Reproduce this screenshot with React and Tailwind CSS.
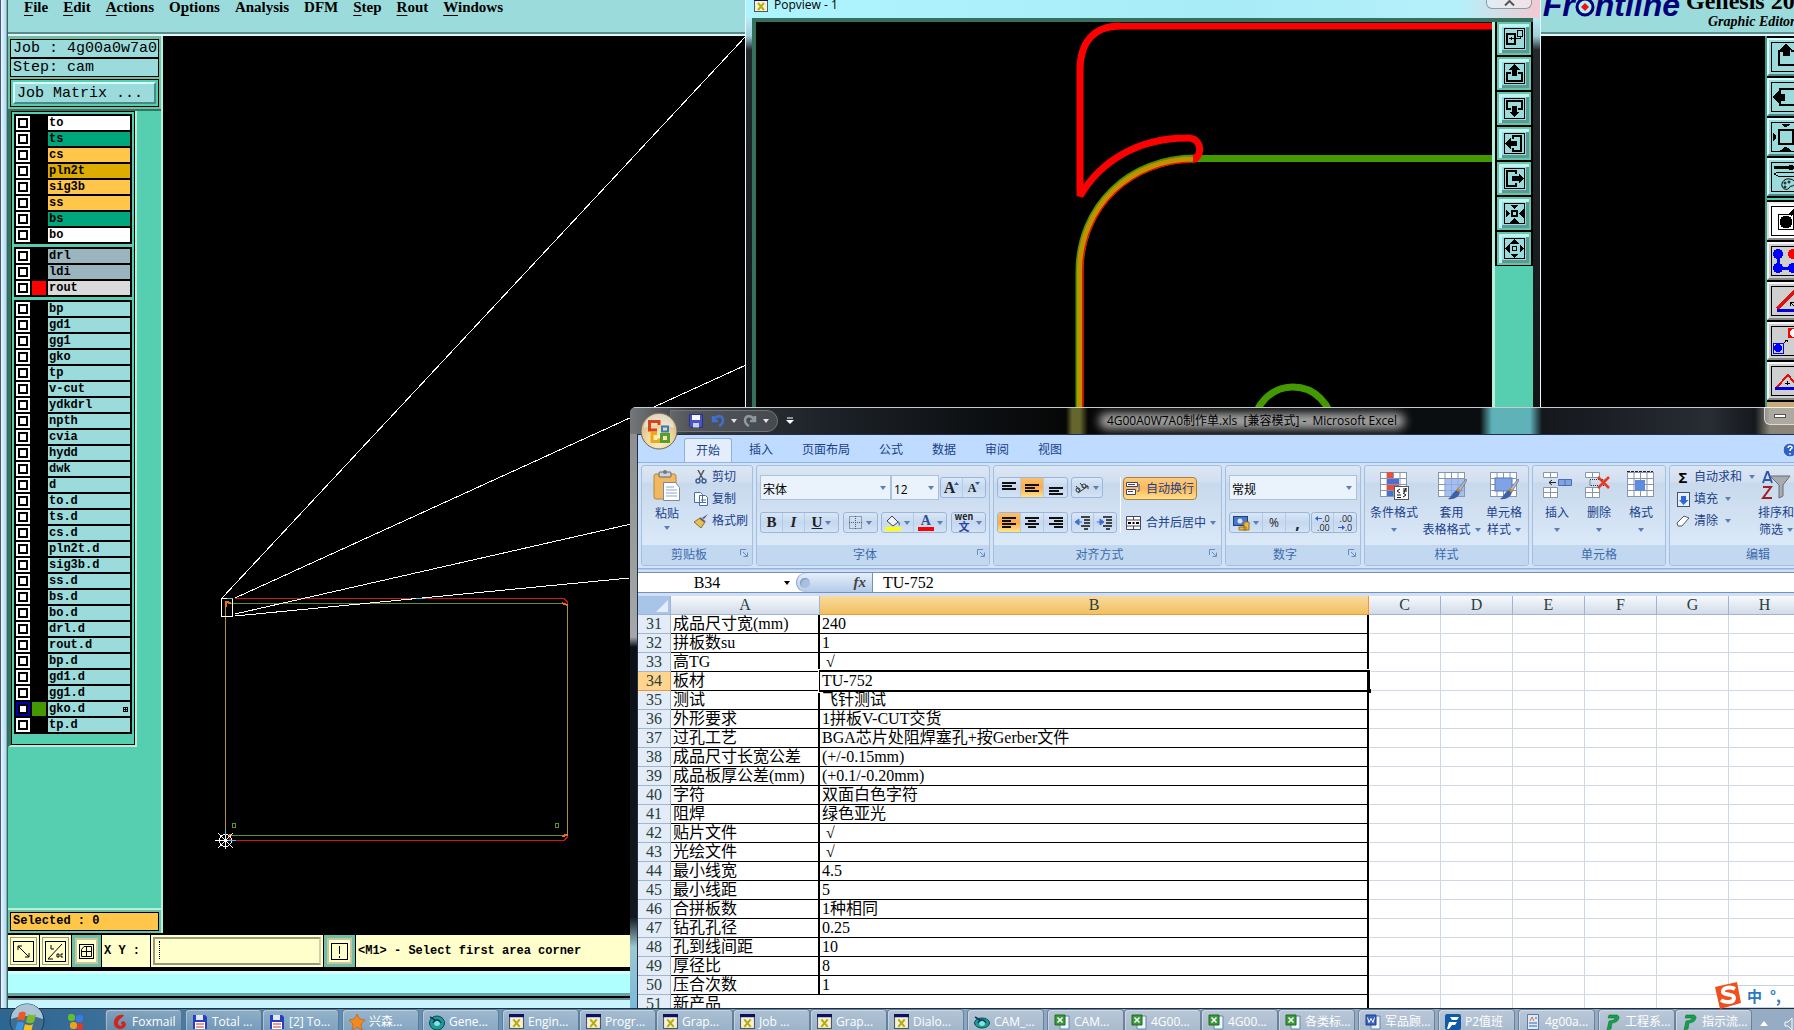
import React from 'react'
import clsx from 'clsx'

const LAYER_GROUPS = [
  [
    { name: 'to', bg: 'bg-white' },
    { name: 'ts', bg: 'bg-[#00a67c]' },
    { name: 'cs', bg: 'bg-[#ffc64a]' },
    { name: 'pln2t', bg: 'bg-[#dcac00]' },
    { name: 'sig3b', bg: 'bg-[#ffc64a]' },
    { name: 'ss', bg: 'bg-[#ffc64a]' },
    { name: 'bs', bg: 'bg-[#00a67c]' },
    { name: 'bo', bg: 'bg-white' },
  ],
  [
    { name: 'drl', bg: 'bg-[#9bb5bf]' },
    { name: 'ldi', bg: 'bg-[#9bb5bf]' },
    { name: 'rout', bg: 'bg-[#dadada]', color: 'bg-[#ff0000]' },
  ],
  [
    'bp', 'gd1', 'gg1', 'gko', 'tp', 'v-cut', 'ydkdrl', 'npth', 'cvia', 'hydd', 'dwk', 'd',
    'to.d', 'ts.d', 'cs.d', 'pln2t.d', 'sig3b.d', 'ss.d', 'bs.d', 'bo.d', 'drl.d', 'rout.d',
    'bp.d', 'gd1.d', 'gg1.d', 'gko.d', 'tp.d',
  ].map((name) => ({
    name,
    bg: 'bg-[#9bdbdb]',
    color: name === 'gko.d' ? 'bg-[#449900]' : undefined,
    work: name === 'gko.d',
  })),
]

const MENUS = [
  ['', 'F', 'ile'], ['', 'E', 'dit'], ['', 'A', 'ctions'], ['O', 'p', 'tions'], ['Analysis', '', ''],
  ['DFM', '', ''], ['', 'S', 'tep'], ['', 'R', 'out'], ['', 'W', 'indows'],
]

const ROWS = [
  [31, '成品尺寸宽(mm)', '240'],
  [32, '拼板数su', '1'],
  [33, '高TG', '√'],
  [34, '板材', 'TU-752'],
  [35, '测试', '飞针测试'],
  [36, '外形要求', '1拼板V-CUT交货'],
  [37, '过孔工艺', 'BGA芯片处阻焊塞孔+按Gerber文件'],
  [38, '成品尺寸长宽公差', '(+/-0.15mm)'],
  [39, '成品板厚公差(mm)', '(+0.1/-0.20mm)'],
  [40, '字符', '双面白色字符'],
  [41, '阻焊', '绿色亚光'],
  [42, '贴片文件', '√'],
  [43, '光绘文件', '√'],
  [44, '最小线宽', '4.5'],
  [45, '最小线距', '5'],
  [46, '合拼板数', '1种相同'],
  [47, '钻孔孔径', '0.25'],
  [48, '孔到线间距', '10'],
  [49, '厚径比', '8'],
  [50, '压合次数', '1'],
  [51, '新产品', ''],
]

const COLS = ['C', 'D', 'E', 'F', 'G', 'H']

const TASKS = [
  [['fox', 'Foxmail']],
  [['disk', 'Total ...'], ['disk', '[2] To...']],
  [['star', '兴森...']],
  [['globe', 'Gene...']],
  [['x', 'Engin...'], ['x', 'Progr...'], ['x', 'Grap...'], ['x', 'Job ...'], ['x', 'Grap...'], ['x', 'Dialo...']],
  [['eye', 'CAM_...']],
  [['excel', 'CAM...'], ['excel', '4G00...'], ['excel', '4G00...'], ['excel', '各类标...']],
  [['word', '军品顾...']],
  [['p2', 'P2值班']],
  [['doc', '4g00a...']],
  [['flow', '工程系...'], ['flow', '指示流...']],
]

/* ---------- Genesis ---------- */

const LayerRow = ({ layer }) => (
  <label className="flex h-4 gap-0.5 pb-0.5">
    <input
      type="checkbox"
      className={clsx(
        'm-0 h-3.5 w-3.5 shrink-0 appearance-none border-2 bg-white shadow-[inset_0_0_0_2px_#000]',
        layer.work ? 'border-[#0000a8]' : 'border-white'
      )}
    />
    <span className={clsx('h-3.5 w-3.5 shrink-0', layer.color)} />
    <span className={clsx('flex h-3.5 flex-1 items-center justify-between pl-px pr-0.5 font-bold', layer.bg)}>
      <span className="text-[12px] leading-[14px]">{layer.name}</span>
      {layer.work && (
        <svg width="5" height="5" viewBox="0 0 5 5" shapeRendering="crispEdges">
          <path d="M.5 .5h4v4h-4zM2.5 0v5M0 2.5h5" fill="none" stroke="#000" />
        </svg>
      )}
    </span>
  </label>
)

const Sidebar = () => (
  <aside className="mb-0.5 flex w-[155px] shrink-0 flex-col border-r-2 border-[#b5f0dc] bg-[#55cfb0] font-['Liberation_Mono',monospace] text-black">
    <div className="flex flex-col border-b-2 border-[#2f7564] bg-[#6fbfa6] px-0.5 pt-[3px] pb-0.5">
      <div className="flex h-[19px] items-center border border-black bg-[#9bdbdb] pl-0.5 text-[15px] leading-none whitespace-pre">Job : 4g00a0w7a0</div>
      <div className="flex h-[19px] items-center border border-black bg-[#9bdbdb] pl-0.5 text-[15px] leading-none">Step: cam</div>
      <div className="mt-0.5 border border-black bg-[#55cfb0] p-0.5">
        <button className="block h-[22px] w-full border-2 border-t-[#d5ffff] border-r-[#4a8785] border-b-[#4a8785] border-l-[#d5ffff] bg-[#9bdbdb] pl-0.5 text-left text-[15px] leading-none">
          Job Matrix ...
        </button>
      </div>
    </div>
    <div className="mr-6 border-r-2 border-b-2 border-l-[3px] border-r-[#b5f0dc] border-b-[#b5f0dc] border-l-[#2f7564]">
      <div className="flex flex-col gap-[3px] border border-black bg-[#55cfb0] px-0.5 pt-0.5 pb-2.5">
        {LAYER_GROUPS.map((group, i) => (
          <div key={i} className="bg-black px-0.5 pt-0.5">
            {group.map((layer) => (
              <LayerRow key={layer.name} layer={layer} />
            ))}
          </div>
        ))}
      </div>
    </div>
    <div className="mt-auto border-t-2 border-[#b5f0dc] bg-[#6fbfa6] px-0.5 py-0.5">
      <div className="h-[19px] border border-black bg-[#ffc64a] pl-0.5 text-[12px] leading-[17px] font-bold">Selected : 0</div>
    </div>
  </aside>
)

const BoardCanvas = () => (
  <svg className="block min-w-0 flex-1 bg-black" height="100%" shapeRendering="crispEdges">
    <g transform="translate(-163 -36)" fill="none">
      <g stroke="#d51414">
        <path d="M235 598.5H564l3 3v5M228 837l3 3.500H564l3-3v-3" />
      </g>
      <path d="M229 603.500H564M229 835.500H564" stroke="#5c9030" />
      <path d="M225.500 604V836M567.500 604V836" stroke="#b09040" />
      <path d="M226 607v-5l5 1M562 603l5 2M228 836l3-1M562 836l5-1" stroke="#f07010" strokeWidth="2" />
      <rect x="232.500" y="823" width="3" height="4" stroke="#5c9030" />
      <rect x="555.500" y="823" width="3" height="4" stroke="#5c9030" />
      <g stroke="#fff">
        <path d="M221.500 598.500h11v18h-11z" />
        <path d="M222 598L746 36M235 598L746 365M235 614L640 522M235 616L640 577" />
        <path d="M215 840.500h18M225.500 831v18M218 833l15 15M233 833l-15 15" />
        <circle cx="225.500" cy="840.500" r="6" />
      </g>
      <path d="M228 840.500h8M225.500 830v5M227 598.500h6M416 598.500h9" stroke="#50c0f0" />
    </g>
  </svg>
)

const ToolFrame = ({ tone, children }) => (
  <button
    className={clsx(
      'h-[38px] w-[38px] shrink-0 border-2 p-0.5',
      tone === 'teal' && 'border-t-[#d5ffff] border-r-[#4a8785] border-b-[#4a8785] border-l-[#d5ffff] bg-[#9bdbdb]',
      tone === 'white' && 'border-t-[#eee] border-r-[#888] border-b-[#888] border-l-[#ddd] bg-white',
      tone === 'gray' && 'border-t-[#f5f5f5] border-r-[#888] border-b-[#888] border-l-[#f5f5f5] bg-[#cfcfcf]'
    )}
  >
    <svg width="30" height="30" viewBox="0 0 30 30" fill="none" stroke="#000" shapeRendering="crispEdges">
      <rect x=".5" y=".5" width="29" height="29" />
      {children}
    </svg>
  </button>
)

const RightTools = () => (
  <div className="flex w-[29px] shrink-0 flex-col gap-0.5 overflow-hidden border-l-2 border-[#3f9a86] bg-black pt-0.5">
    <ToolFrame tone="teal">
      <path d="M12 9H8v14h16V9h-4" strokeWidth="2" />
      <path d="M15 2l5 5h-2v6h-6V7h-2z" fill="#000" />
    </ToolFrame>
    <ToolFrame tone="teal">
      <path d="M9 12V7h15v16H9v-5" strokeWidth="2" />
      <path d="M2 15l5-5v2h6v6H7v2z" fill="#000" />
    </ToolFrame>
    <ToolFrame tone="teal">
      <rect x="8" y="8" width="14" height="14" strokeWidth="2" />
      <path d="M15 5l-4-3h8zM15 25l-4 3h8zM5 15l-3-4v8zM25 15l3-4v8z" fill="#000" />
    </ToolFrame>
    <ToolFrame tone="teal">
      <path d="M3 5.500h14" strokeWidth="3" />
      <circle cx="20" cy="5.500" r="2.500" fill="#000" />
      <path d="M3 12l4-2h21v4H7z" />
      <g shapeRendering="auto">
        <path d="M19 17c-5-1-9 3-8 7 1 3 4 4 6 3s1-3 4-3 5-6-2-7z" />
        <circle cx="14" cy="21" r="1" />
        <circle cx="18" cy="20" r="1" />
        <circle cx="14" cy="25" r="1" />
      </g>
    </ToolFrame>
    <div className="h-0.5 shrink-0 bg-[#55cfb0]" />
    <ToolFrame tone="white">
      <rect x="7.500" y="8.500" width="15" height="15" />
      <circle cx="15" cy="16" r="6" fill="#000" />
      <path d="M19 9l6-6" strokeWidth="3" />
    </ToolFrame>
    <ToolFrame tone="gray">
      <path d="M7 8v14h15" stroke="#0000ff" strokeWidth="3" />
      <g stroke="none" fill="#0000ff">
        <circle cx="7" cy="8" r="5" />
        <circle cx="7" cy="22" r="5" />
        <circle cx="22" cy="22" r="5" />
        <circle cx="22" cy="8" r="5" fill="#f00" />
      </g>
    </ToolFrame>
    <ToolFrame tone="gray">
      <path d="M6 23L24 5" stroke="#e01010" strokeWidth="3" />
      <path d="M6 24.500h22" stroke="#0000e0" strokeWidth="3" />
      <path d="M19 20v-4h4M19 16l4 4" />
    </ToolFrame>
    <ToolFrame tone="gray">
      <rect x="2" y="17" width="10" height="10" stroke="#0000ff" />
      <circle cx="7" cy="22" r="4" fill="#0000ff" stroke="none" />
      <path d="M17 2h12v10H17z" fill="#f00" stroke="none" />
      <circle cx="23" cy="7" r="4" fill="#fff" stroke="none" />
      <path d="M13 17l3-3M14 14h2v2" />
    </ToolFrame>
    <ToolFrame tone="gray">
      <path d="M5 22L17 9l11 13" stroke="#e01010" strokeWidth="2" />
      <path d="M4 22.500h24" stroke="#0000e0" strokeWidth="3" />
      <path d="M16.500 19v-4M14 17h5" />
    </ToolFrame>
    <div className="min-h-0 flex-1 bg-[#c8ab78]" />
  </div>
)

const StatusIcon = ({ children }) => (
  <svg width="21" height="21" viewBox="0 0 21 21" fill="none" stroke="#000">
    <rect x=".5" y=".5" width="20" height="20" />
    {children}
  </svg>
)

const StatusBar = () => (
  <div className="flex h-[34px] shrink-0 gap-px border-b-2 border-black bg-black font-['Liberation_Mono',monospace] text-[12px] font-bold">
    <button aria-label="Zoom" className="flex w-[31px] items-center justify-center border border-[#ffffcc] bg-[#ffffcc] outline outline-1 -outline-offset-[3px] outline-[#99997a]">
      <StatusIcon><path d="M5 9V5h4M5 5l11 11M12 16h4v-4" /></StatusIcon>
    </button>
    <button aria-label="Angle" className="flex w-[31px] items-center justify-center border border-[#ffffcc] bg-[#ffffcc] outline outline-1 -outline-offset-[3px] outline-[#99997a]">
      <StatusIcon><path d="M3 18L17 3M3 18h5M6 4v4h3M12 13h2v3h-2zM18 13h-2v3h2" /></StatusIcon>
    </button>
    <button aria-label="Grid" className="flex w-[29px] items-center justify-center border-[3px] border-[#6fbfa6] bg-[#ffffcc] shadow-[inset_0_0_0_2px_#c8c8a0]">
      <svg width="15" height="15" viewBox="0 0 15 15" fill="none" stroke="#000">
        <rect x=".5" y=".5" width="14" height="14" />
        <path d="M5 2.500h7.500v10h-10v-7zM7.500 2.500v10M2.500 7.500h10" />
      </svg>
    </button>
    <label htmlFor="xy" className="flex w-[48px] items-center bg-[#ffffcc] pl-0.5 whitespace-pre">X Y :</label>
    <div className="relative w-[172px] bg-[#ffffcc] p-0.5">
      <input id="xy" className="h-full w-full border-2 border-t-[#99997a] border-r-[#d0d0a8] border-b-[#99997a] border-l-[#99997a] bg-[#ffffcc] outline-none" />
      <span className="absolute top-1.5 left-2 h-[18px] border-l border-dotted border-black" />
    </div>
    <button aria-label="Message" className="flex w-[31px] items-center justify-center border-[3px] border-[#6fbfa6] bg-[#ffffcc] shadow-[inset_0_0_0_2px_#c8c8a0]">
      <svg width="17" height="17" viewBox="0 0 17 17" fill="none" stroke="#000">
        <rect x=".5" y=".5" width="16" height="16" />
        <path d="M8.500 3v8M8.500 13v2" />
      </svg>
    </button>
    <div className="flex flex-1 items-center bg-[#ffffcc] pl-0.5">&lt;M1&gt; - Select first area corner</div>
  </div>
)

const FrontlineLogo = () => (
  <div className="flex items-end font-['Liberation_Sans',Arial,sans-serif] text-[32px] leading-[30px] font-bold text-[#00007a] italic">
    <span>Fr</span>
    <svg width="20" height="20" viewBox="0 0 20 20" className="mb-[3px]">
      <circle cx="10" cy="10" r="8" fill="#b8f0f0" stroke="#00007a" strokeWidth="3" />
      <path d="M10 6l4 4-4 4-4-4z" fill="#f01010" />
    </svg>
    <span>ntline</span>
  </div>
)

const GenesisWindow = () => (
  <section className="absolute inset-0 flex flex-col bg-[linear-gradient(90deg,#4a5a78_1px,#e4fbff_1px,#b5d5f5_6px,#e4fbff_6px,#2f6a60_7px,#2f6a60_8px,#c8f4fb_8px)] pl-2">
    <div className="flex h-9 shrink-0 items-start justify-between overflow-hidden border-b-2 border-[#e0f6f6] bg-[#9bdbdb] shadow-[inset_0_-2px_0_#5a8c8c]">
      <nav className="flex gap-[15px] pl-4 font-['Liberation_Serif',serif] text-[15px] leading-[14px] font-bold text-black">
        {MENUS.map(([a, u, b]) => (
          <button key={a + u + b}>
            {a}
            {u && <span className="underline underline-offset-3">{u}</span>}
            {b}
          </button>
        ))}
      </nav>
      <div className="flex shrink-0 items-start">
        <div className="-mt-2.5"><FrontlineLogo /></div>
        <div className="-mt-3 flex w-[114px] flex-col font-['Liberation_Serif',serif] font-bold whitespace-nowrap text-black">
          <span className="pl-1.5 text-[24px] leading-[26px]">Genesis 2000</span>
          <span className="pl-7 text-[14px] leading-4 italic">Graphic Editor</span>
        </div>
      </div>
    </div>
    <div className="flex min-h-0 flex-1 bg-black">
      <Sidebar />
      <BoardCanvas />
      <RightTools />
    </div>
    <StatusBar />
    <div className="h-[29px] shrink-0 border-y-2 border-black bg-[#b0ffff] shadow-[inset_0_3px_0_#d5ffff,inset_0_-3px_0_#6aa5a5]" />
    <div className="h-2.5 shrink-0 border-t-2 border-[#6a8c94] bg-[#c8f4fb]" />
  </section>
)

/* ---------- Popview ---------- */

const XIcon = ({ size = 14 }) => (
  <svg width={size} height={size} viewBox="0 0 14 14" className="shrink-0">
    <rect x=".5" y=".5" width="13" height="13" fill="#f4f0e0" stroke="#555" />
    <rect x="0" y="0" width="14" height="3" fill="#101060" />
    <path d="M4 5l6 7M10 5l-6 7" stroke="#b8b000" strokeWidth="2" />
  </svg>
)

const POP_ICONS = [
  <><path d="M2.500 5.500h8v10h-8z" strokeWidth="2" /><path d="M13.500 2.500h5v6h-5zM11 10h5V8M5 10.500h5M7 9v3" /></>,
  <><path d="M7 10H3v8h15v-8h-4" strokeWidth="2" /><path d="M10.500 2l4 4h-2v6h-4V6h-2z" fill="#000" /></>,
  <><path d="M7 11H3V3h15v8h-4" strokeWidth="2" /><path d="M10.500 18l4-4h-2V8h-4v6h-2z" fill="#000" /></>,
  <><path d="M9 6V3h8v15H9v-3" strokeWidth="2" /><path d="M2 10.500l4-4v2h6v4H6v2z" fill="#000" /></>,
  <><path d="M12 6V3H3v15h9v-3" strokeWidth="2" /><path d="M19 10.500l-4-4v2H8v4h7v2z" fill="#000" /></>,
  <><path d="M8 8h5v5H8z" strokeWidth="2" /><path d="M10.500 5.500L7 2h7zM10.500 15.500L7 19h7zM5.500 10.500L2 7v7zM15.500 10.500L19 7v7z" fill="#000" /></>,
  <><path d="M8.500 8.500h4v4h-4z" /><path d="M10.500 2L7.500 5h6zM10.500 19l-3-3h6zM2 10.500l3-3v6zM19 10.500l-3-3v6z" fill="#000" /></>,
]

const PopviewWindow = () => (
  <section className="absolute top-0 bottom-[500px] left-[745px] flex w-[796px] flex-col overflow-hidden border-x border-[#e8f8fc] bg-[linear-gradient(180deg,#aef2fc_0,#b8e8f4_20px,#9fd0dc_36px,#23282d_50px,#0c0e10_100%)]">
    <header className="flex h-[18px] shrink-0 items-start justify-between bg-[linear-gradient(90deg,#aef4fe_0,#a8ecf8_60%,#b5f0fa_90%,#f3c9d2_100%)] pl-2">
      <div className="-mt-0.5 flex items-center gap-1.5 font-['Open_Sans',sans-serif] text-[12px] leading-[14px] text-black">
        <XIcon />
        <span>Popview - 1</span>
      </div>
      <button className="mr-2 flex h-[9px] w-[46px] items-start justify-center rounded-b-md border border-t-0 border-[#8b9da8] bg-white/40" aria-label="Close">
        <svg width="11" height="6" viewBox="0 0 11 6"><path d="M1 5.500L5.500 1 10 5.500" fill="none" stroke="#555" strokeWidth="2" /></svg>
      </button>
    </header>
    <div className="mr-[7px] ml-1.5 flex min-h-0 flex-1 border-t-4 border-l-4 border-[#35705f] bg-black">
      <svg className="block min-w-0 flex-1 bg-black" height="100%">
        <g transform="translate(-756 -22)" fill="none">
          <path d="M1195 158.500h300" stroke="#449900" strokeWidth="7" />
          <path d="M1195 158.500C1130 158.500 1079.500 206 1079.500 272V420" stroke="#449900" strokeWidth="8" />
          <path d="M1190 160C1133 160 1081 206 1080.500 268V420" stroke="#f00" strokeWidth="6" />
          <path d="M1495 26h-375c-26 0-40 16-40 44V196C1100 162 1137 138 1187 138c16-1 16 20 5 22" stroke="#f00" strokeWidth="7" strokeLinejoin="bevel" />
          <path d="M1193 159C1131 159 1080 206 1079.500 270V420" stroke="#c09200" strokeWidth="5" />
          <path d="M1120 22.500h375" stroke="#000" />
          <circle cx="1293" cy="426" r="39" stroke="#449900" strokeWidth="7" />
        </g>
      </svg>
      <div className="flex w-[41px] shrink-0 flex-col border-l-[3px] border-[#b5f0dc] bg-[#55cfb0]">
        <div className="flex flex-col gap-0.5 bg-black px-0.5 pb-px">
          {POP_ICONS.map((icon, i) => (
            <button key={i} className="flex h-[33px] items-center justify-center border-2 border-[#66c4a8] bg-[#9bdbdb] shadow-[inset_3px_3px_0_#c0f4f4,inset_-3px_-3px_0_#5a9a96]">
              <svg width="21" height="21" viewBox="0 0 21 21" fill="none" stroke="#000" shapeRendering="crispEdges">
                <rect x=".5" y=".5" width="20" height="20" fill="#9bdbdb" />
                {icon}
              </svg>
            </button>
          ))}
        </div>
      </div>
    </div>
  </section>
)

/* ---------- Excel ---------- */

const Caret = ({ color = '#5d7fae' }) => (
  <svg width="6" height="4" viewBox="0 0 6 4" className="shrink-0"><path d="M0 0h6L3 4z" fill={color} /></svg>
)

const Group = ({ label, width, launcher, children }) => (
  <div className={clsx('flex h-[101px] shrink-0 flex-col overflow-hidden rounded-[3px] border border-[#a3bfdf] bg-[linear-gradient(180deg,#dce7f5_0,#d2dff0_16px,#c8d9ed_17px,#dbe9f8_80px)]', width)}>
    <div className="min-h-0 flex-1 px-[3px]">{children}</div>
    <div className="relative h-5 bg-[#c1d8f0] text-center text-[12px] leading-5 text-[#3e6aaa]">
      <span className={clsx(launcher && 'pr-4')}>{label}</span>
      {launcher && (
        <svg className="absolute top-1 right-1" width="8" height="8" viewBox="0 0 8 8" fill="none" stroke="#6a8cba">
          <path d="M.5 6V.5H6M3 3l4 4M7.500 3.500v4h-4" />
        </svg>
      )}
    </div>
  </div>
)

const Set = ({ children }) => (
  <div className="flex h-[21px] shrink-0 divide-x divide-[#b4cbe6] overflow-hidden rounded-[3px] border border-[#9ab6da] bg-[linear-gradient(180deg,#dae7f6_0,#c5d8ef_50%,#d4e3f5_100%)]">{children}</div>
)

const Btn = ({ w = 'w-[23px]', on, label, children }) => (
  <button
    aria-label={label}
    className={clsx('flex h-full items-center justify-center gap-[3px]', w, on && 'bg-[linear-gradient(180deg,#fbc06a_0,#fdaa4a_50%,#ffe58a_100%)]')}
  >
    {children}
  </button>
)

const Lines = ({ ws, y = 1, align = 'start' }) => (
  <svg width="14" height="14" viewBox="0 0 14 14" shapeRendering="crispEdges">
    {ws.map((w, i) => (
      <rect key={i} x={align === 'start' ? 0 : align === 'end' ? 14 - w : (14 - w) / 2} y={y + i * 3} width={w} height={ws.length > 4 ? 1 : 2} fill="#111" />
    ))}
  </svg>
)

const Combo = ({ label, options, w }) => (
  <div className={clsx('relative h-[25px] border border-[#abc1de] bg-[#eaf2fb]', w)}>
    <select aria-label={label} className="h-full w-full appearance-none bg-transparent pl-0.5 text-[12px] text-black outline-none">
      {options.map((o) => <option key={o}>{o}</option>)}
    </select>
    <span className="pointer-events-none absolute top-0 right-1 flex h-full items-center"><Caret /></span>
  </div>
)

const GridIcon = ({ kind }) => (
  <svg width="30" height="30" viewBox="0 0 30 30">
    {kind !== 'ins' && kind !== 'del' && (
      <>
        <rect x="1.500" y="2.500" width="26" height="24" fill="#fff" stroke="#8795ad" />
        <path d="M1.500 8.500h26M1.500 14.500h26M1.500 20.500h26M8 2.500v24M14.500 2.500v24M21 2.500v24" stroke="#8795ad" />
      </>
    )}
    {kind === 'cond' && (
      <>
        <path d="M8 2h6v6H8zM8 15h12v5H8z" fill="#e8503a" />
        <path d="M8 9h12v5H8zM8 21h6v5H8z" fill="#4a6fd0" />
        <rect x="15.500" y="16.500" width="14" height="13" fill="#fff" stroke="#556" />
        <path d="M21 19l-3 2 3 2M18 25h4M18 27.500h4M24 19h4M24 21h4M27 18l-2 5M24 23l3 2-3 2" fill="none" stroke="#111" />
      </>
    )}
    {kind === 'table' && <path d="M8 9h19v17H8z" fill="#8fb0ea" opacity=".8" />}
    {kind === 'cell' && <rect x="6" y="8" width="17" height="13" fill="#7fa4e6" stroke="#5476b8" />}
    {(kind === 'table' || kind === 'cell') && (
      <>
        <path d="M29 9l-9 11 3 2 7-12z" fill="#b0b8c8" stroke="#5a6578" strokeWidth=".6" />
        <path d="M20 20l3 2c-1 5-6 8-12 7 4-2 4-7 9-9z" fill="#3b62a8" />
        <path d="M21 18l3 2.500-1.500 2-3.500-2.500z" fill="#c8863a" />
      </>
    )}
    {(kind === 'ins' || kind === 'del') && (
      <g fill="#fff" stroke="#8795ad">
        <path d="M1.500 2.500h14v5h-14zM8.500 2.500v5M1.500 17.500h14v10h-14zM8.500 17.500v10M1.500 22.500h14" />
      </g>
    )}
    {kind === 'ins' && (
      <>
        <path d="M16.500 9.500h13v6h-13zM23 9.500v6" fill="#7fa4e6" stroke="#4a6cb0" />
        <path d="M14 12.500H7M10 10l-3 2.500 3 2.500" fill="none" stroke="#222" />
      </>
    )}
    {kind === 'del' && (
      <>
        <path d="M6 9.500h14v6H6z" fill="none" stroke="#333" strokeDasharray="1 1" />
        <path d="M14 7l11 11M25 7L14 18" stroke="#e63a22" strokeWidth="2.500" />
      </>
    )}
    {kind === 'fmt' && (
      <>
        <path d="M1 1.500h26" stroke="#222" strokeDasharray="3 1" />
        <path d="M9 10h10v11H9z" fill="#5f8be0" />
      </>
    )}
  </svg>
)

const BigBtn = ({ icon, lines, w }) => (
  <button className={clsx('flex shrink-0 flex-col items-center text-[12px] leading-[17px] text-[#1a418c]', w)}>
    {icon}
    <span className="mt-1 whitespace-nowrap">{lines[0]}</span>
    <span className="flex h-[17px] items-center gap-1 whitespace-nowrap">
      {lines[1]}
      <Caret />
    </span>
  </button>
)

const SmallBtn = ({ icon, text, caret }) => (
  <button className="flex h-[22px] items-center gap-[3px] text-[12px] leading-none whitespace-nowrap text-[#1a418c]">
    <span className="flex w-4 justify-center">{icon}</span>
    {text}
    {caret && <span className="pl-1"><Caret /></span>}
  </button>
)

const ClipboardIcon = () => (
  <svg width="30" height="32" viewBox="0 0 30 32">
    <rect x="2" y="4" width="22" height="25" rx="2" fill="#f0b860" stroke="#b98434" />
    <rect x="7" y="2" width="12" height="5" rx="1" fill="#ccd3de" stroke="#666" />
    <circle cx="13" cy="2" r="2" fill="#777" />
    <path d="M11.500 12.500h12l4 5v13h-16z" fill="#fff" stroke="#7a8aa4" />
    <path d="M14 17h8M14 20h11M14 23h11M14 26h11" stroke="#8fa5cc" />
  </svg>
)

const OfficeOrb = () => (
  <svg width="38" height="38" viewBox="0 0 38 38">
    <defs>
      <radialGradient id="orb" cx=".5" cy=".75" r=".8">
        <stop offset="0" stopColor="#fff6d8" />
        <stop offset=".5" stopColor="#ecd29a" />
        <stop offset="1" stopColor="#b8aa90" />
      </radialGradient>
    </defs>
    <circle cx="19" cy="19" r="18" fill="url(#orb)" stroke="#6a6558" />
    <path d="M4 16a15 14 0 0 1 30 0c-10-4-20-4-30 0z" fill="#fff" opacity=".45" />
    <g fill="none" strokeWidth="3">
      <path d="M17 18H9.500V9.500H19V13" stroke="#d8431a" />
      <path d="M22 14.500h6v5h-6z" stroke="#2f7cc8" strokeWidth="2" />
      <path d="M17 21.500h-5v8h7v-3" stroke="#eea812" />
      <path d="M21.500 22.500h7v7h-7z" stroke="#5a9e2a" />
    </g>
  </svg>
)

const FloppyIcon = () => (
  <svg width="14" height="14" viewBox="0 0 14 14">
    <path d="M.5 .5h13v13H2l-1.500-1.500z" fill="#4a55c0" stroke="#2a3080" />
    <rect x="3" y="1" width="8" height="5" fill="#f3f6ff" />
    <rect x="4" y="9" width="6" height="4.500" fill="#c8d0ee" />
  </svg>
)

const TitleBar = () => (
  <header className="relative flex h-[27px] shrink-0 items-center bg-[linear-gradient(90deg,#75787a_0,#34383c_60px,#1d2228_200px,#0a0c0e_380px,#070707_436px,#65652e_442px,#65652e_450px,#070707_458px,#0b0e11_850px,#5fb2b8_862px,#5fb2b8_900px,#14181d_912px,#282c33_1080px,#15191d_1125px,#8a8578_1140px)] shadow-[inset_0_1px_0_#c8ccd0]">
    <div className="ml-10 flex h-[22px] w-[108px] shrink-0 items-center rounded-r-full border border-[#6f7478] bg-white/15 pl-[18px]">
      <FloppyIcon />
      <svg className="ml-2" width="14" height="14" viewBox="0 0 14 14" fill="none" stroke="#3f6fd0" strokeWidth="2.500"><path d="M2 2v5h5M2.500 6.500C5 1 12 1 12 6c0 3-2 5-4 6" /></svg>
      <span className="mx-1.5"><Caret color="#dfe4ea" /></span>
      <svg width="14" height="14" viewBox="0 0 14 14" fill="none" stroke="#9098a0" strokeWidth="2.500"><path d="M12 2v5H7M11.500 6.500C9 1 2 1 2 6c0 3 2 5 4 6" /></svg>
      <span className="ml-1.5"><Caret color="#dfe4ea" /></span>
    </div>
    <svg className="ml-2" width="8" height="8" viewBox="0 0 8 8"><path d="M1 1h6" stroke="#fff" /><path d="M0 3h8L4 7z" fill="#fff" /></svg>
    <h1 className="flex min-w-0 flex-1 justify-center pr-[54px] font-['Open_Sans','Noto_Sans_CJK_SC',sans-serif] text-[12px] leading-4 whitespace-pre text-black">
      <span className="relative px-2">
        <span className="absolute inset-0 rounded-full bg-[#a6a6a6] blur-[5px]" />
        <span className="relative">4G00A0W7A0制作单.xls  [兼容模式] -  Microsoft Excel</span>
      </span>
    </h1>
    <button aria-label="Minimize" className="flex h-[18px] w-[30px] items-center justify-center self-start rounded-bl-md border border-r-0 border-white/60 bg-white/30">
      <span className="h-1 w-3 border border-[#555] bg-white" />
    </button>
    <div className="absolute top-[5px] left-2.5 z-10"><OfficeOrb /></div>
  </header>
)

const TABS = ['开始', '插入', '页面布局', '公式', '数据', '审阅', '视图']

const Ribbon = () => (
  <div className="shrink-0 bg-[#bfdbff] font-['Open_Sans','Noto_Sans_CJK_SC',sans-serif]">
    <div className="flex h-[27px] items-end gap-[5px] pl-[46px]">
      {TABS.map((t, i) => (
        <button
          key={t}
          className={clsx(
            'h-6 rounded-t-[3px] px-3 text-[12px] leading-6 whitespace-nowrap text-[#1a418c]',
            i === 0 && 'border-x border-t border-[#8fb1de] bg-[#e4eefb] px-[11px]'
          )}
        >
          {t}
        </button>
      ))}
      <svg className="-mr-1 mb-1 ml-auto shrink-0" width="16" height="16" viewBox="0 0 16 16">
        <circle cx="8" cy="8" r="7" fill="#2f62c8" stroke="#e8f0ff" />
        <path d="M6 6c0-3 5-2 4 0-1 1-2 1-2 3M8 11v1.500" stroke="#fff" strokeWidth="1.500" fill="none" />
      </svg>
    </div>
    <div className="flex gap-[3px] overflow-hidden border-y border-[#8db2e3] bg-[#d3e3f5] px-[3px] pt-0.5 pb-0.5">
      <Group label="剪贴板" width="w-[112px]" launcher>
        <div className="flex items-start gap-1">
          <button className="flex w-[44px] flex-col items-center pt-1 text-[12px] text-[#1a418c]">
            <ClipboardIcon />
            <span className="mt-1 mb-1 leading-4">粘贴</span>
            <Caret />
          </button>
          <div className="flex flex-col">
            <SmallBtn text="剪切" icon={<svg width="12" height="14" viewBox="0 0 12 14" fill="none" stroke="#3f5f9a" strokeWidth="1.500"><path d="M3 0l5 9M9 0L4 9" stroke="#555" /><circle cx="3" cy="11" r="2" /><circle cx="9" cy="11" r="2" /></svg>} />
            <SmallBtn text="复制" icon={<svg width="14" height="14" viewBox="0 0 14 14" fill="#fff" stroke="#4a6cb0"><path d="M.5 .5h6l2 2v8h-8zM5.500 3.500h6l2 2v8h-8z" /><path d="M7 8h5M7 10.500h5" /></svg>} />
            <SmallBtn text="格式刷" icon={<svg width="15" height="14" viewBox="0 0 15 14"><path d="M14 0l-4 5-2-1z" fill="#5a4a9a" /><path d="M6 4l5 4-4 6-7-6z" fill="#e8c050" stroke="#8a7030" /><path d="M6 4l5 4" stroke="#666" strokeWidth="2" /></svg>} />
          </div>
        </div>
      </Group>
      <Group label="字体" width="w-[234px]" launcher>
        <div className="flex flex-col gap-3 pt-[9px]">
          <div className="flex items-center">
            <Combo label="字体" options={['宋体']} w="w-[131px]" />
            <Combo label="字号" options={['12']} w="w-[48px]" />
            <div className="ml-auto">
              <Set>
                <Btn label="增大字号" w="w-[22px]"><span className="font-['Liberation_Serif',serif] text-[16px] leading-none font-bold text-[#222]">A</span><svg className="-ml-1 mb-2" width="5" height="3"><path d="M0 3h5L2.500 0z" fill="#2f5fb0" /></svg></Btn>
                <Btn label="减小字号" w="w-[22px]"><span className="font-['Liberation_Serif',serif] text-[12px] leading-none font-bold text-[#222]">A</span><svg className="-ml-1 mb-2" width="5" height="3"><path d="M0 0h5L2.500 3z" fill="#2f5fb0" /></svg></Btn>
              </Set>
            </div>
          </div>
          <div className="flex justify-between font-['Liberation_Serif',serif] text-[15px] leading-none text-[#222]">
            <Set>
              <Btn label="加粗" w="w-[22px]"><b>B</b></Btn>
              <Btn label="倾斜" w="w-[22px]"><b className="italic">I</b></Btn>
              <Btn label="下划线" w="w-[33px]"><b className="underline">U</b><Caret /></Btn>
            </Set>
            <Set>
              <Btn label="边框" w="w-[33px]">
                <svg width="14" height="14" viewBox="0 0 14 14" fill="none" stroke="#556" strokeDasharray="1 1"><path d="M.5 .5h12v12H.5zM6.500 0v13M0 6.500h13" /></svg>
                <Caret />
              </Btn>
            </Set>
            <Set>
              <Btn label="填充颜色" w="w-8">
                <svg width="16" height="17" viewBox="0 0 16 17"><path d="M7 2l6 6-5 4-6-5z" fill="#eef2f8" stroke="#445" /><path d="M13 7c3 2 2 4 1 5z" fill="#3f6fd0" /><rect x="0" y="13" width="16" height="4" fill="#ff0" /></svg>
                <Caret />
              </Btn>
              <Btn label="字体颜色" w="w-8">
                <span className="flex flex-col items-center text-[14px] leading-[12px] font-bold text-[#2f4f8a]">A<span className="h-1 w-4 bg-[#f00]" /></span>
                <Caret />
              </Btn>
            </Set>
            <Set>
              <Btn label="拼音" w="w-[33px]">
                <span className="flex flex-col items-center font-['Noto_Sans_CJK_SC',sans-serif] text-[9px] leading-[8px] font-bold">wén<span className="text-[11px] leading-[11px] text-[#2a44a8]">文</span></span>
                <Caret />
              </Btn>
            </Set>
          </div>
        </div>
      </Group>
      <Group label="对齐方式" width="w-[229px]" launcher>
        <div className="flex gap-[3px] pt-[11px]">
          <div className="flex flex-col gap-3.5">
            <div className="flex gap-[3px]">
              <Set>
                <Btn label="顶端对齐"><Lines ws={[14, 10, 14]} y={1} /></Btn>
                <Btn label="垂直居中" on><Lines ws={[14, 10, 14]} y={3} /></Btn>
                <Btn label="底端对齐"><Lines ws={[14, 10, 14]} y={6} /></Btn>
              </Set>
              <Set>
                <Btn label="方向" w="w-[30px]">
                  <svg width="15" height="14" viewBox="0 0 15 14" fill="none" stroke="#333"><path d="M1 5l4 5M5 2l4 5M3 12L13 5M10 5h3v3" /><circle cx="3" cy="9" r="2" /><circle cx="9" cy="5" r="2" /></svg>
                  <Caret />
                </Btn>
              </Set>
            </div>
            <div className="flex gap-[3px]">
              <Set>
                <Btn label="左对齐" on><Lines ws={[14, 9, 14, 9]} /></Btn>
                <Btn label="居中"><Lines ws={[14, 8, 14, 8]} align="center" /></Btn>
                <Btn label="右对齐"><Lines ws={[14, 9, 14, 9]} align="end" /></Btn>
              </Set>
              <Set>
                <Btn label="减少缩进" w="w-[22px]"><svg width="16" height="14" viewBox="0 0 16 14"><path d="M6 1h9M9 4h6M9 7h6M6 10h9M9 13h4" stroke="#111" strokeWidth="1.500" /><path d="M0 6l4-3v6zM4 6h3" fill="#3f6fd0" stroke="#3f6fd0" /></svg></Btn>
                <Btn label="增加缩进" w="w-[22px]"><svg width="16" height="14" viewBox="0 0 16 14"><path d="M6 1h9M9 4h6M9 7h6M6 10h9M9 13h4" stroke="#111" strokeWidth="1.500" /><path d="M7 6L3 3v6zM0 6h3" fill="#3f6fd0" stroke="#3f6fd0" /></svg></Btn>
              </Set>
            </div>
          </div>
          <div className="flex flex-col gap-3 border-l border-white pl-0.5 text-[12px] text-[#1a418c]">
            <button className="flex h-[23px] w-[74px] items-center gap-1 rounded-sm border border-[#a8823c] bg-[linear-gradient(180deg,#fccb80_0,#fdb85a_50%,#ffe08a_100%)] pl-0.5 whitespace-nowrap">
              <svg width="16" height="14" viewBox="0 0 16 14" fill="#fff" stroke="#446"><path d="M.5 .5h11v4H.5zM.5 7.500h9v5h-9zM2 2.500h7M2 9.500h5M13 2v7h-2" /></svg>
              自动换行
            </button>
            <button className="flex h-[21px] items-center gap-1 pl-[3px] whitespace-nowrap">
              <svg width="16" height="14" viewBox="0 0 16 14" fill="#fff" stroke="#446"><path d="M.5 .5h14v13H.5zM.5 4h14M.5 10h14M7.500 0v4M7.500 10v4" /><path d="M2 7h3M13 7h-3M6.500 7h2" stroke="#000" strokeWidth="2" /></svg>
              合并后居中
              <Caret />
            </button>
          </div>
        </div>
      </Group>
      <Group label="数字" width="w-[136px]" launcher>
        <div className="flex flex-col gap-3 pt-[9px]">
          <Combo label="数字格式" options={['常规']} w="w-[128px]" />
          <div className="flex justify-between text-[12px] leading-none text-[#222]">
            <Set>
              <Btn label="会计格式" w="w-[33px]">
                <svg width="17" height="16" viewBox="0 0 17 16"><rect x=".5" y="1.500" width="14" height="9" fill="#4a78c8" stroke="#1f3f80" /><circle cx="7" cy="6" r="2.500" fill="#d8e4fa" /><path d="M6 12h7v3H6zM11 7h5v8h-5z" fill="#f0b840" stroke="#98701a" /></svg>
                <Caret />
              </Btn>
              <Btn>%</Btn>
              <Btn><b className="text-[16px] leading-none">,</b></Btn>
            </Set>
            <Set>
              <Btn label="增加小数位数" w="w-[22px]">
                <span className="flex flex-col items-end text-[9px] leading-[9px]">
                  <span className="flex items-center"><svg width="7" height="5" viewBox="0 0 7 5"><path d="M0 2.500L3 0v2h4v1H3v2z" fill="#2f5fd0" /></svg>.0</span>
                  <span>.00</span>
                </span>
              </Btn>
              <Btn label="减少小数位数" w="w-[22px]">
                <span className="flex flex-col items-end text-[9px] leading-[9px]">
                  <span>.00</span>
                  <span className="flex items-center"><svg width="7" height="5" viewBox="0 0 7 5"><path d="M7 2.500L4 0v2H0v1h4v2z" fill="#2f5fd0" /></svg>.0</span>
                </span>
              </Btn>
            </Set>
          </div>
        </div>
      </Group>
      <Group label="样式" width="w-[165px]">
        <div className="flex justify-between pt-1">
          <BigBtn icon={<GridIcon kind="cond" />} lines={['条件格式', '']} w="w-[52px]" />
          <BigBtn icon={<GridIcon kind="table" />} lines={['套用', '表格格式']} w="w-[60px]" />
          <BigBtn icon={<GridIcon kind="cell" />} lines={['单元格', '样式']} w="w-[42px]" />
        </div>
      </Group>
      <Group label="单元格" width="w-[134px]">
        <div className="flex justify-between pt-1">
          <BigBtn icon={<GridIcon kind="ins" />} lines={['插入', '']} w="w-[42px]" />
          <BigBtn icon={<GridIcon kind="del" />} lines={['删除', '']} w="w-[42px]" />
          <BigBtn icon={<GridIcon kind="fmt" />} lines={['格式', '']} w="w-[42px]" />
        </div>
      </Group>
      <Group label="编辑" width="w-[178px]">
        <div className="flex items-start pl-0.5">
          <div className="flex w-[80px] flex-col">
            <SmallBtn text="自动求和" caret icon={<b className="text-[15px] text-black">Σ</b>} />
            <SmallBtn text="填充" caret icon={<svg width="13" height="15" viewBox="0 0 13 15"><rect x=".5" y=".5" width="12" height="14" fill="#e8f0ff" stroke="#456" /><path d="M4 4h5v4h2.500L6.500 13 2 8h2z" fill="#2f66d8" /></svg>} />
            <SmallBtn text="清除" caret icon={<svg width="14" height="12" viewBox="0 0 14 12"><path d="M1 8l7-7 5 2-7 8H2z" fill="#fff" stroke="#556" /></svg>} />
          </div>
          <div className="pt-1">
            <BigBtn
              icon={<svg width="30" height="30" viewBox="0 0 30 30"><path d="M2 13L6 2h1l4 11M4 10h6" fill="none" stroke="#2f55b0" strokeWidth="2" /><path d="M2 17h8L2 28h9" fill="none" stroke="#a02020" strokeWidth="2" /><path d="M9 6h20l-7 9v11l-4 2V15z" fill="#a8acb2" stroke="#6a6e74" /></svg>}
              lines={['排序和', '筛选']}
              w="w-[42px]"
            />
          </div>
        </div>
      </Group>
    </div>
  </div>
)

const FormulaBar = () => (
  <div className="flex h-[27px] shrink-0 flex-col border-t border-[#b7cde8] bg-[#cfe0f5] pt-0.5 font-['Liberation_Serif','Noto_Sans_CJK_SC',serif] text-[16px] text-black">
    <div className="flex h-[21px] border-y border-[#7591b8] bg-white">
      <div className="relative flex w-[158px] shrink-0 items-center">
        <input aria-label="名称框" defaultValue="B34" className="w-[138px] bg-transparent text-center outline-none" />
        <span className="pl-2"><Caret color="#000" /></span>
      </div>
      <button aria-label="插入函数" className="flex w-[77px] shrink-0 items-center justify-between rounded-l-full border-r border-[#7591b8] bg-[linear-gradient(180deg,#e6eefa_0,#b4cbe9_100%)] pr-1.5 pl-1 shadow-[inset_1px_0_0_#8ba6cc]">
        <span className="h-2.5 w-2.5 rounded-full bg-[#a9bfdf] shadow-[inset_1px_1px_1px_#7f98bd]" />
        <i className="text-[15px] leading-none font-bold text-[#444]">fx</i>
      </button>
      <input aria-label="编辑栏" defaultValue="TU-752" className="min-w-0 flex-1 bg-white pl-2.5 outline-none" />
    </div>
  </div>
)

const headCell = 'h-[19px] border-r border-b border-[#9eb6ce] p-0 text-center leading-[18px] font-normal text-[#27413e]'

const Sheet = () => (
  <div className="min-h-0 flex-1 overflow-hidden bg-white">
    <table className="w-[1163px] table-fixed border-separate border-spacing-0 font-['Liberation_Serif','Noto_Sans_CJK_SC',serif] text-[16px] text-black">
      <colgroup>
        <col className="w-[33px]" />
        <col className="w-[149px]" />
        <col className="w-[549px]" />
        {COLS.map((c) => <col key={c} className="w-[72px]" />)}
      </colgroup>
      <thead>
        <tr>
          <th className={clsx(headCell, 'bg-[#a9c4e9]')}>
            <svg className="mt-0.5 mr-0.5 ml-auto block" width="12" height="12" viewBox="0 0 12 12"><path d="M12 0v12H0z" fill="#e3ecf8" /></svg>
          </th>
          <th className={clsx(headCell, 'bg-[linear-gradient(180deg,#f6fafd_0,#d3dbe9_100%)]')}>A</th>
          <th className={clsx(headCell, 'border-[#f29536] bg-[linear-gradient(180deg,#f9d99f_0,#f1c15f_100%)]')}>B</th>
          {COLS.map((c) => (
            <th key={c} className={clsx(headCell, 'bg-[linear-gradient(180deg,#f6fafd_0,#d3dbe9_100%)]')}>{c}</th>
          ))}
        </tr>
      </thead>
      <tbody>
        {ROWS.map(([n, a, b]) => (
          <tr key={n}>
            <th className={clsx(headCell, n === 34 ? 'border-[#f29536] bg-[#ffd58d]' : 'bg-[#e4ecf7]')}>{n}</th>
            <td className={clsx('h-[19px] overflow-hidden border-b border-black p-0 pl-0.5 leading-[18px] whitespace-nowrap', n < 51 && 'border-r-2')}>{a}</td>
            <td className="relative h-[19px] border-r-2 border-b border-black p-0 pl-0.5 leading-[18px] whitespace-nowrap">
              {b === '√' ? <span className="pl-1">√</span> : b}
              {n === 34 && (
                <div className="absolute -top-0.5 -right-[3px] -bottom-0.5 -left-px border border-black shadow-[0_0_0_1px_#fff]">
                  <span className="absolute -right-0.5 -bottom-0.5 h-1 w-1 bg-black" />
                </div>
              )}
            </td>
            {COLS.map((c) => <td key={c} className="h-[19px] border-r border-b border-[#d0d7e5] p-0" />)}
          </tr>
        ))}
      </tbody>
    </table>
  </div>
)

const ExcelWindow = () => (
  <section className="absolute top-[407px] right-0 bottom-0 left-[630px] flex flex-col overflow-hidden rounded-tl-md bg-[linear-gradient(180deg,#8a8c8e_0,#a5a7a8_230px,#0c1014_240px,#12181d_510px,#9cc8d0_540px,#7db8dc_100%)]">
    <TitleBar />
    <div className="ml-[7px] flex min-h-0 flex-1 flex-col border-t border-l border-[#20304a]">
      <Ribbon />
      <FormulaBar />
      <Sheet />
    </div>
  </section>
)

/* ---------- Taskbar ---------- */

const TaskIcon = ({ kind }) => {
  if (kind === 'x') return <XIcon size={15} />
  return (
    <svg width="16" height="16" viewBox="0 0 16 16" className="shrink-0">
      {kind === 'fox' && <path d="M12 1C5 0 1 5 2 10c1 6 10 7 12 1 0-4-4-5-5-2 0 2 2 2 2 1-1 3-5 2-5-1 0-4 4-4 6-8z" fill="#d0261c" />}
      {kind === 'disk' && <><path d="M1 1h12l2 2v12H1z" fill="#2a3fc0" /><path d="M4 1h7v5H4z" fill="#dfe6f8" /><path d="M3 8h10v7H3z" fill="#fff" /><path d="M4 10h8M4 13h8" stroke="#c33" /></>}
      {kind === 'star' && <path d="M8 0l2.500 5 5.500 1-4 4 1 6-5-3-5 3 1-6-4-4 5.500-1z" fill="#f58a1c" stroke="#b8541a" strokeWidth=".6" />}
      {(kind === 'globe' || kind === 'eye') && <><ellipse cx="8" cy="9" rx="7.500" ry={kind === 'eye' ? 5 : 7} fill="#1f9a9a" stroke="#0a4a50" /><circle cx="8" cy="9" r="3" fill="#7fe8d0" /><path d="M1 3l5 3M4 9c2-4 6-4 8 0" stroke="#0c3a60" fill="none" strokeWidth="1.500" /></>}
      {kind === 'excel' && <><path d="M6 2h9v13H6z" fill="#eef4fa" stroke="#6a86a8" /><path d="M1 1h10v10H1z" fill="#3d9a3a" stroke="#1f6a20" /><path d="M3.500 3.500l5 5M8.500 3.500l-5 5" stroke="#fff" strokeWidth="1.500" /></>}
      {kind === 'word' && <><path d="M6 2h9v13H6z" fill="#eef4fa" stroke="#6a86a8" /><path d="M1 1h10v10H1z" fill="#3a62c0" stroke="#1f3f8a" /><path d="M2.500 3.500l1.500 5 2-4 2 4 1.500-5" stroke="#fff" fill="none" /></>}
      {kind === 'p2' && <><rect width="16" height="16" rx="2" fill="#0f5aa8" /><path d="M5 3h9l-2 3H7zM4 8h8l-2 3H7l-3 4H2z" fill="#fff" /></>}
      {kind === 'doc' && <><path d="M2.500 .5h11v15h-11z" fill="#dfeaf8" stroke="#5a7aa8" /><path d="M5 7l2-4 2 4" stroke="#e0701a" fill="none" /><path d="M10 4h2M4 9h8M4 12h8" stroke="#3a62a8" /></>}
      {kind === 'flow' && <path d="M4 1h8c4 1 2 8-5 8l-1 6-4 1 2-9 5-1 1-2H3z" fill="#15a04a" stroke="#0a6a2c" strokeWidth=".5" />}
    </svg>
  )
}

const Taskbar = () => (
  <footer className="relative flex h-[22px] shrink-0 overflow-hidden border-t border-[#1d2f40] bg-[linear-gradient(90deg,#2d6690_0,#3a6f98_100px,#5b8ab0_300px,#7d9dbb_700px,#93a9c2_1100px,#96abc4_100%)] font-['Open_Sans','Noto_Sans_CJK_SC',sans-serif]">
    <div className="w-[68px] shrink-0" />
    <div className="w-[37px] shrink-0 pt-1">
      <svg width="16" height="18" viewBox="0 0 16 18">
        <rect x="0" y="1" width="7" height="7" rx="3" fill="#5fc030" />
        <rect x="8" y="2" width="7" height="7" rx="3" fill="#3a7ae8" />
        <rect x="2" y="9" width="7" height="7" rx="3" fill="#f0a020" />
        <rect x="9" y="10" width="6" height="7" rx="3" fill="#e03a2a" />
      </svg>
    </div>
    <div className="flex gap-[3px]">
      {TASKS.map((group, i) => (
        <div key={i} className="flex">
          {group.map(([icon, text], j) => (
            <button
              key={j}
              className="flex h-9 w-[77px] items-start gap-1 rounded-t-sm border border-b-0 border-[#3c5a78]/60 bg-[linear-gradient(180deg,rgba(255,255,255,.35),rgba(255,255,255,.1))] pt-1 pl-1.5 text-[12px] leading-[16px] whitespace-nowrap text-white shadow-[inset_1px_1px_0_rgba(255,255,255,.35)]"
            >
              <TaskIcon kind={icon} />
              {text}
            </button>
          ))}
        </div>
      ))}
    </div>
    <div className="flex items-start gap-4 pt-1 pl-2">
      <svg className="mt-2" width="8" height="5" viewBox="0 0 8 5"><path d="M0 5h8L4 0z" fill="#fff" /></svg>
      <svg className="mt-1" width="16" height="14" viewBox="0 0 16 14" fill="none" stroke="#fff"><path d="M1 5h3l4-4v12L4 9H1z" /><path d="M10 4c2 2 2 4 0 6M12 2c3 3 3 7 0 10" /></svg>
    </div>
  </footer>
)

const StartOrb = () => (
  <button aria-label="Start" className="absolute -bottom-[9px] left-[9px] z-20">
    <svg width="36" height="36" viewBox="0 0 36 36">
      <circle cx="18" cy="18" r="17" fill="#3f6e92" stroke="#1c3a54" />
      <path d="M2 16a16 15 0 0 1 32 0c-10-4-22-4-32 0z" fill="#cfe0ec" opacity=".75" />
      <path d="M10 10c3-2 5-1 7 0l-2 8c-2-1-4-2-7 0z" fill="#ec5a24" />
      <path d="M19 11c2 1 5 2 8 0l-2 8c-3 2-6 1-8 0z" fill="#7cba2c" />
      <path d="M8 20c3-2 5-1 7 0l-2 8c-2-1-4-2-7 0z" fill="#3a94e0" />
      <path d="M16 21c2 1 5 2 8 0l-2 8c-3 2-6 1-8 0z" fill="#f8c020" />
    </svg>
  </button>
)

const ImeBar = () => (
  <div className="absolute right-0 bottom-[22px] z-10 flex h-[23px] w-[69px] items-start gap-2 overflow-visible border border-r-0 border-[#c5d3e0] bg-white pt-0.5 pl-[21px] font-['Noto_Sans_CJK_SC',sans-serif] text-[15px] leading-4 font-bold whitespace-nowrap text-[#2b78c0]">
    <svg className="absolute -top-1 -left-3" width="28" height="28" viewBox="0 0 28 28">
      <path d="M1 5L23 0l4 21L6 27z" fill="#f04e1a" />
      <path d="M21 7c-5-3-13-1-12 3s11 1 11 6-9 5-13 2" fill="none" stroke="#fff" strokeWidth="4" />
    </svg>
    <span>中</span>
    <span>°,</span>
  </div>
)

const App = () => {
  return (
    <div className="relative flex h-screen flex-col overflow-hidden bg-black">
      <main className="relative min-h-0 flex-1 overflow-hidden">
        <GenesisWindow />
        <PopviewWindow />
        <ExcelWindow />
      </main>
      <Taskbar />
      <ImeBar />
      <StartOrb />
    </div>
  )
}

export default App
